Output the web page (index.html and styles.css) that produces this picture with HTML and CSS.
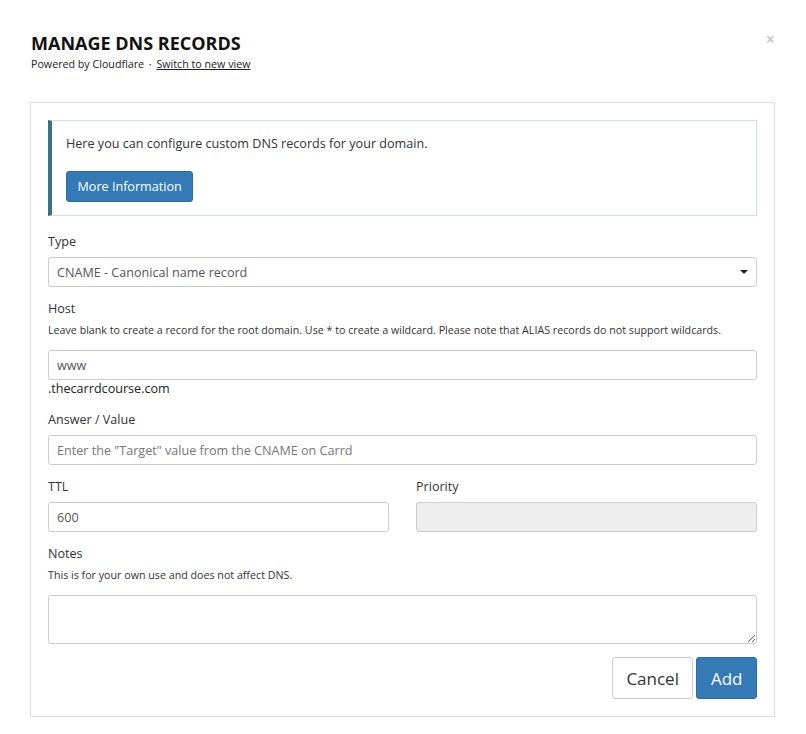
FILE: index.html
```html
<!DOCTYPE html>
<html lang="en">
<head>
    <meta charset="UTF-8">
    <meta name="viewport" content="width=device-width, initial-scale=1.0">
    <title>Manage DNS Records</title>
    <link rel="stylesheet" href="styles.css">
</head>
<body>
    <div class="modal">
        <span class="close">&times;</span>
        <h1>MANAGE DNS RECORDS</h1>
        <p class="powered">Powered by Cloudflare <span class="dot">&middot;</span> <a href="#">Switch to new view</a></p>

        <div class="panel">
            <div class="info">
                <p>Here you can configure custom DNS records for your domain.</p>
                <button class="btn btn-primary btn-sm">More Information</button>
            </div>

            <div class="form-group">
                <label for="type">Type</label>
                <div class="select">
                    <span>CNAME - Canonical name record</span>
                    <span class="caret"></span>
                </div>
            </div>

            <div class="form-group">
                <label for="host">Host</label>
                <p class="help">Leave blank to create a record for the root domain. Use * to create a wildcard. Please note that ALIAS records do not support wildcards.</p>
                <input type="text" id="host" value="www">
                <div class="domain">.thecarrdcourse.com</div>
            </div>

            <div class="form-group">
                <label for="answer">Answer / Value</label>
                <input type="text" id="answer" placeholder="Enter the &quot;Target&quot; value from the CNAME on Carrd">
            </div>

            <div class="form-row">
                <div class="form-group">
                    <label for="ttl">TTL</label>
                    <input type="text" id="ttl" value="600">
                </div>
                <div class="form-group">
                    <label for="priority">Priority</label>
                    <input type="text" id="priority" disabled>
                </div>
            </div>

            <div class="form-group">
                <label for="notes">Notes</label>
                <p class="help">This is for your own use and does not affect DNS.</p>
                <textarea id="notes"></textarea>
            </div>

            <div class="actions">
                <button class="btn btn-default btn-lg">Cancel</button>
                <button class="btn btn-primary btn-lg">Add</button>
            </div>
        </div>
    </div>
</body>
</html>
```

FILE: styles.css
```css
body {
    font-family: "Open Sans", Arial, sans-serif;
    background-color: #fff;
    color: #333;
    margin: 0;
}

.modal {
    position: relative;
    padding: 32px 31px 17px 30px;
}

.close {
    position: absolute;
    top: 28px;
    right: 31px;
    font-size: 16px;
    color: #c8c8c8;
    font-weight: bold;
}

h1 {
    font-size: 18px;
    font-weight: 700;
    line-height: 22px;
    margin: 0 0 0 1px;
    color: #111;
}

.powered {
    font-size: 10.7px;
    line-height: 16px;
    margin: 2px 0 30px 1px;
    color: #222;
}

.powered .dot {
    margin: 0 2px;
}

.powered a {
    color: #222;
}

.panel {
    border: 1px solid #ddd;
    padding: 17px;
}

.info {
    border: 1px solid #bce8f1;
    border-left: 4px solid #3d6f89;
    padding: 14px 14px 13px 14px;
    margin-bottom: 17px;
}

.info p {
    font-size: 12.6px;
    line-height: 18px;
    margin: 0 0 18px 0;
}

.btn {
    font-family: "Open Sans", Arial, sans-serif;
    border-radius: 3px;
    cursor: pointer;
}

.btn-primary {
    background-color: #337ab7;
    border: 1px solid #2e6da4;
    color: #fff;
}

.btn-default {
    background-color: #fff;
    border: 1px solid #ccc;
    color: #333;
}

.btn-sm {
    font-size: 12.6px;
    height: 31px;
    padding: 0 10.5px;
}

.btn-lg {
    font-size: 17px;
    height: 42px;
    padding: 0 13.5px;
}

.form-group {
    margin-bottom: 13px;
}

label {
    display: block;
    font-size: 12.6px;
    line-height: 18px;
    margin-bottom: 6px;
}

.help {
    font-size: 10.7px;
    line-height: 16px;
    margin: -2px 0 12px 0;
}

input,
textarea,
.select {
    display: block;
    box-sizing: border-box;
    width: 100%;
    height: 30px;
    padding: 0 8px;
    border: 1px solid #ccc;
    border-radius: 3px;
    font-family: "Open Sans", Arial, sans-serif;
    font-size: 12.6px;
    color: #555;
    background-color: #fff;
}

input::placeholder {
    color: #777;
}

input:disabled {
    background-color: #eee;
}

.select {
    display: flex;
    align-items: center;
    justify-content: space-between;
}

.caret {
    width: 0;
    height: 0;
    border-left: 4px solid transparent;
    border-right: 4px solid transparent;
    border-top: 4px solid #222;
    margin-right: 0;
}

.domain {
    font-size: 12.6px;
    line-height: 18px;
    color: #222;
}

.form-row {
    display: grid;
    grid-template-columns: 1fr 1fr;
    column-gap: 27px;
}

textarea {
    height: 49px;
    padding: 6px 8px;
    margin-top: 0;
}

.actions {
    display: flex;
    justify-content: flex-end;
    gap: 3px;
    margin-top: 1px;
}
```
